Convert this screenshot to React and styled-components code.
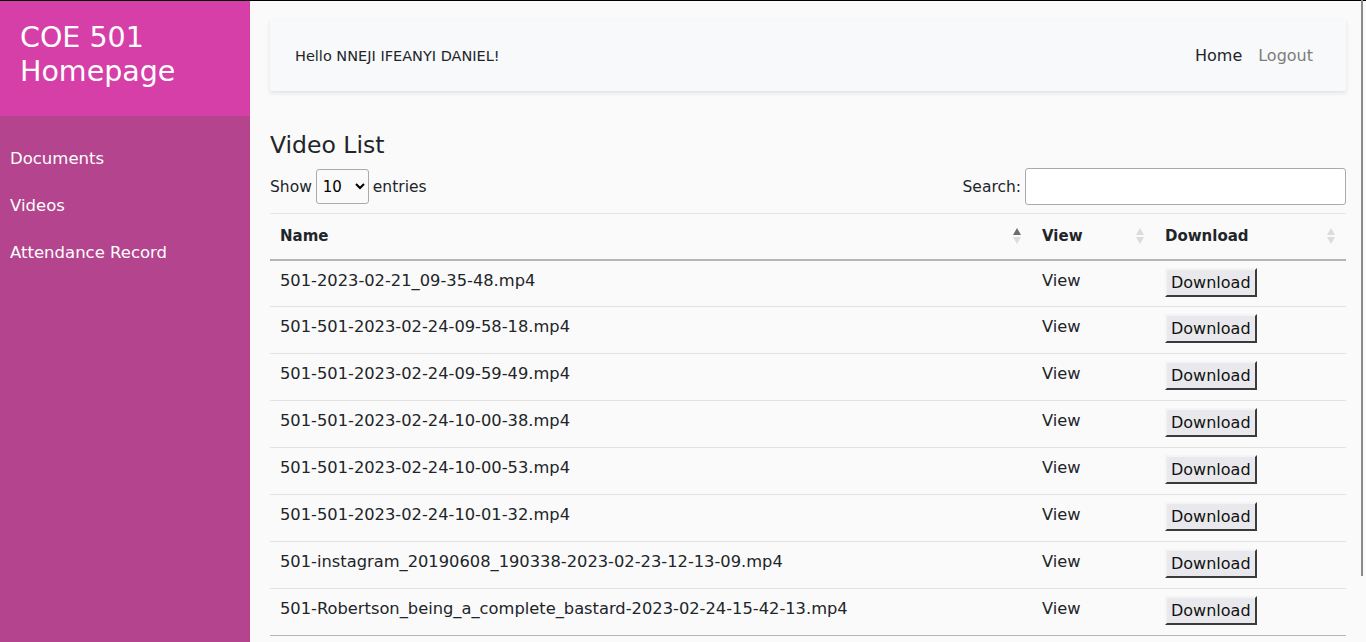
import React from "react";
import styled, { createGlobalStyle } from "styled-components";

const GlobalStyle = createGlobalStyle`
  html, body {
    margin: 0;
    padding: 0;
    background: #fafafa;
    font-family: "DejaVu Sans", "Noto Sans", sans-serif;
    color: #212529;
  }
  * { box-sizing: border-box; }
`;

const videos = [
  "501-2023-02-21_09-35-48.mp4",
  "501-501-2023-02-24-09-58-18.mp4",
  "501-501-2023-02-24-09-59-49.mp4",
  "501-501-2023-02-24-10-00-38.mp4",
  "501-501-2023-02-24-10-00-53.mp4",
  "501-501-2023-02-24-10-01-32.mp4",
  "501-instagram_20190608_190338-2023-02-23-12-13-09.mp4",
  "501-Robertson_being_a_complete_bastard-2023-02-24-15-42-13.mp4",
];

function SortIcon( { active } ){
  return (
    <SortWrap>
      <svg width="10" height="18" viewBox="0 0 10 18">
        <path d="M5 1 L9 8 L1 8 Z" fill={ active ? "#6c6c6c" : "#dcdcdc" } />
        <path d="M5 17 L9 10 L1 10 Z" fill="#dcdcdc" />
      </svg>
    </SortWrap>
  );
}

function App(){
  return ( <>
    <GlobalStyle />
    <Page>
      <Sidebar>
        <Brand>COE 501 Homepage</Brand>
        <NavList>
          <NavItem>Documents</NavItem>
          <NavItem>Videos</NavItem>
          <NavItem>Attendance Record</NavItem>
        </NavList>
      </Sidebar>
      <Main>
        <TopBar>
          <Greeting>Hello NNEJI IFEANYI DANIEL!</Greeting>
          <TopLinks>
            <TopLink active>Home</TopLink>
            <TopLink>Logout</TopLink>
          </TopLinks>
        </TopBar>
        <Title>Video List</Title>
        <Controls>
          <Label>
            Show
            <Select defaultValue="10">
              <option>10</option>
              <option>25</option>
              <option>50</option>
              <option>100</option>
            </Select>
            entries
          </Label>
          <Label>
            Search:
            <SearchInput type="search" />
          </Label>
        </Controls>
        <Table>
          <thead>
            <tr>
              <Th width="762px">Name<SortIcon active /></Th>
              <Th width="123px">View<SortIcon /></Th>
              <Th>Download<SortIcon /></Th>
            </tr>
          </thead>
          <tbody>
            { videos.map( ( v, i ) => (
              <Row key={ v } last={ i === videos.length - 1 }>
                <Td>{ v }</Td>
                <Td>View</Td>
                <Td><DownloadButton>Download</DownloadButton></Td>
              </Row>
            ) ) }
          </tbody>
        </Table>
      </Main>
      <ScrollThumb />
    </Page>
  </> );
}

export default App;

const Page = styled.div`
  display: flex;
  min-height: 100vh;
  border-top: 1px solid #000;
`;

const Sidebar = styled.aside`
  width: 250px;
  flex-shrink: 0;
  background: #b4448d;
  display: flex;
  flex-direction: column;
`;

const Brand = styled.div`
  background: #d63fa8;
  color: #fff;
  height: 115px;
  padding: 20px 60px 0 20px;
  font-size: 28.5px;
  line-height: 34px;
  font-weight: 500;
`;

const NavList = styled.nav`
  display: flex;
  flex-direction: column;
  padding-top: 32px;
  gap: 25px;
`;

const NavItem = styled.a`
  color: #fff;
  font-size: 16.5px;
  line-height: 22px;
  padding-left: 10px;
  cursor: pointer;
`;

const Main = styled.main`
  flex: 1;
  padding: 19px 20px 0 20px;
  min-width: 0;
`;

const TopBar = styled.header`
  height: 71px;
  background: #f8f9fa;
  box-shadow: 0 2px 4px rgba(0, 0, 0, 0.1);
  display: flex;
  align-items: center;
  justify-content: space-between;
  padding: 0 33px 0 25px;
`;

const Greeting = styled.span`
  font-size: 14.5px;
  color: #212529;
`;

const TopLinks = styled.div`
  display: flex;
  gap: 16px;
`;

const TopLink = styled.a`
  font-size: 16px;
  color: ${ p => p.active ? "#212529" : "#7d7d7d" };
  cursor: pointer;
`;

const Title = styled.h2`
  margin: 39px 0 8px 0;
  font-size: 23.5px;
  line-height: 30px;
  font-weight: 500;
  color: #212529;
`;

const Controls = styled.div`
  display: flex;
  justify-content: space-between;
  align-items: center;
  margin-bottom: 8px;
`;

const Label = styled.label`
  display: flex;
  align-items: center;
  gap: 4px;
  font-size: 15.5px;
  color: #212529;
`;

const Select = styled.select`
  height: 35px;
  width: 53px;
  border: 1px solid #aaa;
  border-radius: 3px;
  background: #fafafa;
  font-family: inherit;
  font-size: 15px;
  padding: 0 2px;
`;

const SearchInput = styled.input`
  width: 321px;
  height: 37px;
  border: 1px solid #aaa;
  border-radius: 3px;
  background: #fff;
  font-family: inherit;
`;

const Table = styled.table`
  width: 100%;
  border-collapse: collapse;
  border-top: 1px solid #e4e4e4;
`;

const SortWrap = styled.span`
  position: absolute;
  right: 10px;
  top: 50%;
  transform: translateY(-50%);
  display: flex;
`;

const Th = styled.th`
  position: relative;
  width: ${ p => p.width || "auto" };
  text-align: left;
  font-size: 15px;
  font-weight: 700;
  height: 46px;
  padding: 0 10px;
  border-bottom: 2px solid #b5b5b5;
  color: #212529;
`;

const Row = styled.tr`
  border-bottom: 1px solid ${ p => p.last ? "#b5b5b5" : "#e2e2e2" };
`;

const Td = styled.td`
  font-size: 16.3px;
  height: 47px;
  padding: 0 10px;
  vertical-align: top;
  padding-top: 10px;
  color: #212529;
  white-space: nowrap;
`;

const DownloadButton = styled.button`
  font-family: inherit;
  font-size: 16px;
  line-height: 19px;
  color: #111;
  background: #e9e9ed;
  border: 2px outset #ccc;
  border-top-color: #f4f4f4;
  border-left-color: #f4f4f4;
  border-right-color: #8f8f8f;
  border-bottom-color: #8f8f8f;
  padding: 3px 4px;
  margin-top: -3px;
  cursor: pointer;
`;

const ScrollThumb = styled.div`
  position: fixed;
  top: 0;
  right: 3px;
  width: 2px;
  height: 576px;
  background: #8a8a8a;
`;
